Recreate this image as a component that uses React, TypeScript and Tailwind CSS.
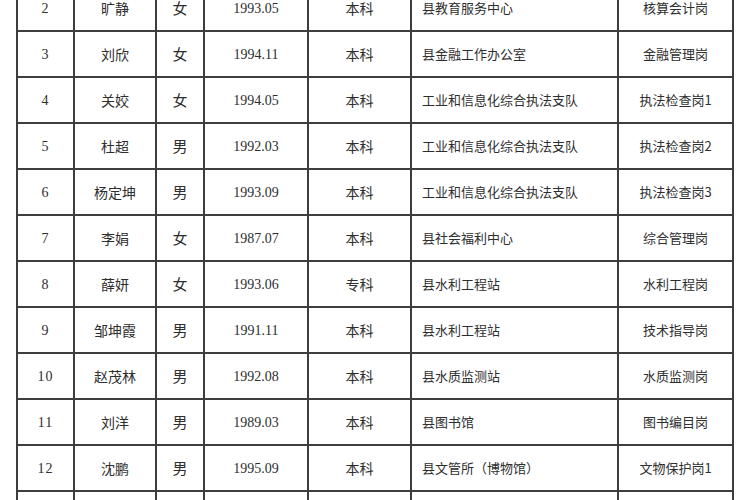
const rows = [
  { no: '2', name: '旷静', sex: '女', born: '1993.05', edu: '本科', unit: '县教育服务中心', post: '核算会计岗' },
  { no: '3', name: '刘欣', sex: '女', born: '1994.11', edu: '本科', unit: '县金融工作办公室', post: '金融管理岗' },
  { no: '4', name: '关姣', sex: '女', born: '1994.05', edu: '本科', unit: '工业和信息化综合执法支队', post: '执法检查岗1' },
  { no: '5', name: '杜超', sex: '男', born: '1992.03', edu: '本科', unit: '工业和信息化综合执法支队', post: '执法检查岗2' },
  { no: '6', name: '杨定坤', sex: '男', born: '1993.09', edu: '本科', unit: '工业和信息化综合执法支队', post: '执法检查岗3' },
  { no: '7', name: '李娟', sex: '女', born: '1987.07', edu: '本科', unit: '县社会福利中心', post: '综合管理岗' },
  { no: '8', name: '薛妍', sex: '女', born: '1993.06', edu: '专科', unit: '县水利工程站', post: '水利工程岗' },
  { no: '9', name: '邹坤霞', sex: '男', born: '1991.11', edu: '本科', unit: '县水利工程站', post: '技术指导岗' },
  { no: '10', name: '赵茂林', sex: '男', born: '1992.08', edu: '本科', unit: '县水质监测站', post: '水质监测岗' },
  { no: '11', name: '刘洋', sex: '男', born: '1989.03', edu: '本科', unit: '县图书馆', post: '图书编目岗' },
  { no: '12', name: '沈鹏', sex: '男', born: '1995.09', edu: '本科', unit: '县文管所（博物馆）', post: '文物保护岗1' },
];

const cjk = "font-['Noto_Sans_CJK_SC',sans-serif]";
const num = "font-['Liberation_Serif','Noto_Sans_CJK_SC',serif]";
const cell = 'flex h-full items-center border-r-2 border-[#3d3d3d]';

function Row({ r }: { r?: (typeof rows)[number] }) {
  return (
    <div className="grid h-[46px] grid-cols-[57px_82px_48px_104px_103px_207px_115px] border-b-2 border-[#3d3d3d] text-[#2e2e2e]">
      <div className={`${cell} justify-center ${num} text-[14px] tracking-[1px]`}>{r?.no}</div>
      <div className={`${cell} justify-center ${cjk} text-[14px]`}>{r?.name}</div>
      <div className={`${cell} justify-center ${cjk} text-[15px]`}>{r?.sex}</div>
      <div className={`${cell} justify-center ${num} text-[14px]`}>{r?.born}</div>
      <div className={`${cell} justify-center ${cjk} text-[14px]`}>{r?.edu}</div>
      <div className={`${cell} pl-[10px] ${cjk} text-[13px]`}>{r?.unit}</div>
      <div className={`${cell} justify-center ${cjk} text-[13px]`}>{r?.post}</div>
    </div>
  );
}

export default function App() {
  return (
    <div className="h-[500px] w-[750px] overflow-hidden bg-white pl-[16px]">
      <div className="-mt-[14px] w-[718px] border-l-2 border-[#3d3d3d]">
        {rows.map((r) => (
          <Row key={r.no} r={r} />
        ))}
        <Row />
      </div>
    </div>
  );
}
